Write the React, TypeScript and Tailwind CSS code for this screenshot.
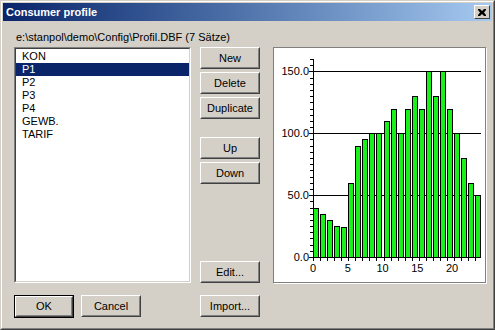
const items = ["KON", "P1", "P2", "P3", "P4", "GEWB.", "TARIF"];

const values = [40, 35, 30, 25, 24, 60, 90, 95, 100, 100, 110, 120, 100, 120, 130, 120, 150, 130, 150, 120, 100, 80, 60, 50];

const font = { fontFamily: '"Liberation Sans", Arial, sans-serif' };

function Btn({ label, isDefault = false }: { label: string; isDefault?: boolean }) {
  return (
    <div className={isDefault ? "h-[23px] w-[60px] border border-black" : "h-[22px] w-[60px]"}>
      <div className="flex h-full w-full items-center justify-center border border-t-white border-l-white border-r-[#404040] border-b-[#404040] bg-[#d4d0c8]">
        <div className="flex h-full w-full items-center justify-center border border-transparent border-r-[#808080] border-b-[#808080] text-[11px] text-black">
          {label}
        </div>
      </div>
    </div>
  );
}

function Chart() {
  const y = (v: number) => 257 - v * 1.2373;
  const x = (i: number) => 313 + i * 7.05;
  const ticksY = Array.from({ length: 33 }, (_, k) => k * 5);
  return (
    <svg width="100%" height="100%" viewBox="274 48 211 234" className="block">
      {[50, 100, 150].map((v) => (
        <line key={v} x1={309} x2={481} y1={y(v) + 0.5} y2={y(v) + 0.5} stroke="#000" strokeWidth={1} shapeRendering="crispEdges" />
      ))}
      {values.map((v, i) => (
        <rect key={i} x={x(i) + 0.5} y={y(v) + 0.5} width={5} height={257 - y(v)} fill="#1af01a" stroke="#000" strokeWidth={1} shapeRendering="crispEdges" />
      ))}
      <line x1={313.5} x2={313.5} y1={y(160)} y2={257} stroke="#000" shapeRendering="crispEdges" />
      {ticksY.map((v) => (
        <line key={v} x1={310} x2={313} y1={Math.round(y(v)) + 0.5} y2={Math.round(y(v)) + 0.5} stroke="#000" shapeRendering="crispEdges" />
      ))}
      <line x1={309} x2={481} y1={257.5} y2={257.5} stroke="#000" shapeRendering="crispEdges" />
      {Array.from({ length: 24 }, (_, i) => (
        <line key={i} x1={Math.round(x(i)) + 0.5} x2={Math.round(x(i)) + 0.5} y1={257} y2={261} stroke="#000" shapeRendering="crispEdges" />
      ))}
      {[0, 50, 100, 150].map((v) => (
        <text key={v} x={309} y={y(v) + 4} textAnchor="end" fontSize={11} style={font} fill="#000">
          {v.toFixed(1)}
        </text>
      ))}
      {[0, 5, 10, 15, 20].map((v) => (
        <text key={v} x={313 + v * 6.95} y={272} textAnchor="middle" fontSize={11} style={font} fill="#000">
          {v}
        </text>
      ))}
    </svg>
  );
}

export default function App() {
  return (
    <div style={font} className="h-[330px] w-[495px] border border-t-[#d4d0c8] border-l-[#d4d0c8] border-r-[#404040] border-b-[#404040] bg-[#d4d0c8]">
      <div className="flex h-full w-full flex-col border border-t-white border-l-white border-r-[#808080] border-b-[#808080] p-px">
        <div className="flex h-[18px] items-center bg-gradient-to-r from-[#0a246a] to-[#a6caf0] pl-[3px] pr-[2px]">
          <span className="text-[11px] font-bold text-white">Consumer profile</span>
          <div className="ml-auto flex h-[14px] w-[16px] items-center justify-center border border-t-white border-l-white border-r-[#404040] border-b-[#404040] bg-[#d4d0c8]">
            <svg width="8" height="7" viewBox="0 0 8 7">
              <path d="M0 0h2l2 2 2-2h2v1L6 3.5 8 6v1H6L4 5 2 7H0V6l2-2.5L0 1z" fill="#000" />
            </svg>
          </div>
        </div>

        <div className="flex flex-col pl-[11px]">
          <div className="mt-[10px] h-[13px] pl-[2px] text-[11px] leading-[13px] text-black">
            e:\stanpol\demo\Config\Profil.DBF (7 Sätze)
          </div>

          <div className="mt-[3px] flex h-[236px]">
            <div className="w-[177px] border border-t-[#808080] border-l-[#808080] border-r-white border-b-white">
              <div className="h-full w-full border border-t-[#404040] border-l-[#404040] border-r-[#d4d0c8] border-b-[#d4d0c8] bg-white pt-px">
                {items.map((it) => (
                  <div
                    key={it}
                    className={
                      it === "P1"
                        ? "h-[13px] bg-[#0a246a] pl-[6px] text-[11px] leading-[13px] text-white"
                        : "h-[13px] pl-[6px] text-[11px] leading-[13px] text-black"
                    }
                  >
                    {it}
                  </div>
                ))}
              </div>
            </div>

            <div className="ml-[9px] flex w-[60px] flex-col">
              <div className="flex flex-col gap-[3px]">
                <Btn label="New" />
                <Btn label="Delete" />
                <Btn label="Duplicate" />
              </div>
              <div className="mt-[18px] flex flex-col gap-[3px]">
                <Btn label="Up" />
                <Btn label="Down" />
              </div>
              <div className="mt-auto">
                <Btn label="Edit..." />
              </div>
            </div>

            <div className="ml-[13px] w-[213px] border border-[#808080] bg-white shadow-[1px_1px_0_#ffffff]">
              <Chart />
            </div>
          </div>

          <div className="mt-[12px] flex">
            <div className="flex w-[177px] gap-[7px]">
              <Btn label="OK" isDefault />
              <Btn label="Cancel" />
            </div>
            <div className="ml-[9px]">
              <Btn label="Import..." />
            </div>
          </div>
        </div>
      </div>
    </div>
  );
}
